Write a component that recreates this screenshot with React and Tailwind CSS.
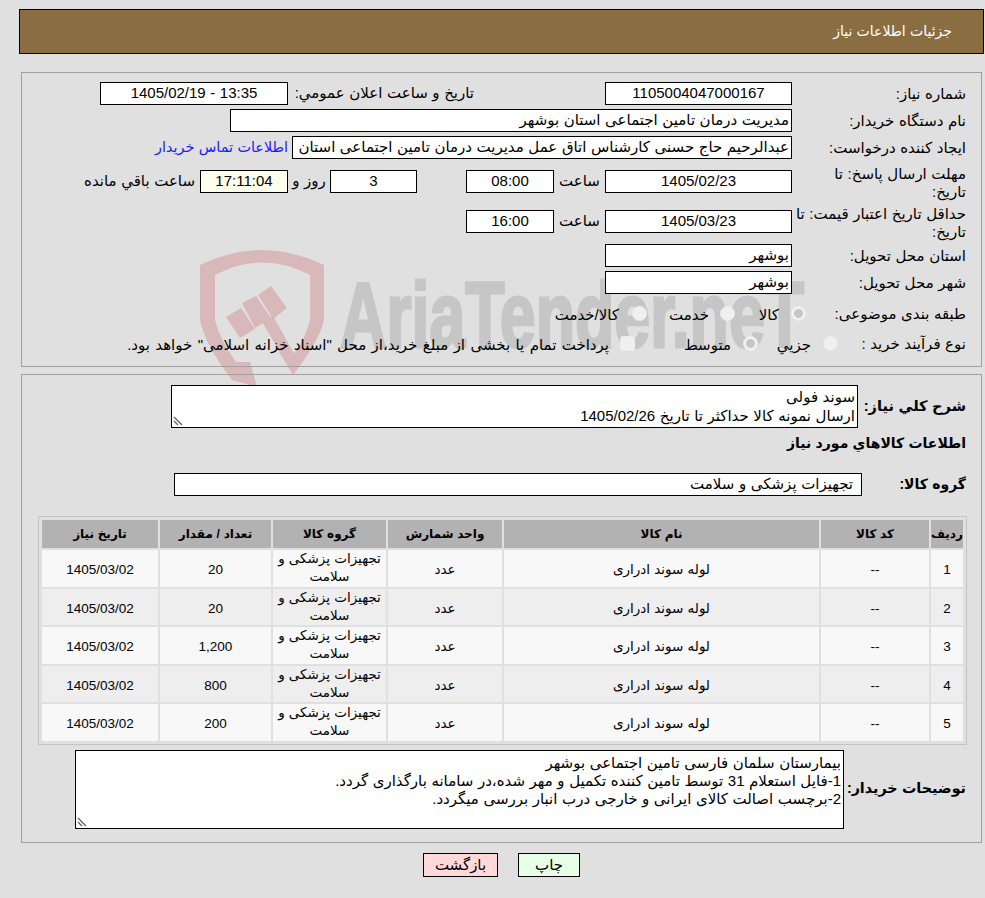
import React from "react";

const rows = [
  { id: 1, qty: "20" },
  { id: 2, qty: "20" },
  { id: 3, qty: "1,200" },
  { id: 4, qty: "800" },
  { id: 5, qty: "200" },
];

const Field = ({ className = "", children }) => (
  <div className={`h-[23px] shrink-0 border border-black bg-white flex items-center justify-center overflow-hidden whitespace-nowrap ${className}`}>
    {children}
  </div>
);

const Label = ({ className = "", children }) => (
  <div className={`w-[174px] shrink-0 leading-[18px] ${className}`}>{children}</div>
);

const Radio = ({ checked, className = "" }) => (
  <span className={`w-[15px] h-[15px] shrink-0 rounded-full border border-[#ececec] mt-[-2px] flex items-center justify-center ${checked ? "bg-[#f3f3f3]" : "bg-[#f0f0f0]"} ${className}`}>
    {checked && <span className="w-[9px] h-[9px] rounded-full bg-[#c6c6c6]" />}
  </span>
);

const Grip = () => (
  <svg className="absolute left-[1px] bottom-[1px]" width="10" height="10" viewBox="0 0 10 10">
    <path d="M1 1L9 9M1 5L5 9" stroke="#666" strokeWidth="1.4" fill="none" />
  </svg>
);

// background logo, the page's form sits on top of it
const Watermark = () => (
  <div className="absolute left-[198px] top-[248px] w-[620px] h-[145px] pointer-events-none" dir="ltr">
    <svg className="absolute left-0 top-0" width="135" height="145" viewBox="198 248 135 145">
      <path
        d="M200 265Q262 235 324 265V320Q320 340 293 375L275 345L293 355Q306 338 310 320V275Q262 250 215 275V320Q220 340 236 362L250 362L257 387L232 380Q205 345 200 320Z"
        fill="#d9b8ba"
      />
      <path d="M226 317L241 308L255 329L240 338Z M242 303L256 296L271 318L255 328Z M258 295L271 286L287 308L273 319Z" fill="#d9b8ba" />
      <path d="M262 322L273 316L296 357L286 362Z" fill="#d9b8ba" />
    </svg>
    <div className="absolute left-[142px] top-[7px] text-[92px] font-bold text-[#c6c6c6] leading-[120px] whitespace-nowrap origin-left scale-x-[0.7] [-webkit-text-stroke:3px_#c6c6c6] font-['Liberation_Sans',sans-serif]">
      AriaTender.neT
    </div>
  </div>
);

const App = () => {
  return (
    <div dir="rtl" className="relative min-h-[898px] bg-[#e0e0e0] text-[15px] text-black overflow-hidden [word-spacing:0.4px] font-['Liberation_Sans','DejaVu_Sans',sans-serif]">
      <div className="h-[9px]" />
      <div className="ml-[19px] mr-[1px] h-[45px] bg-[#8b6d42] border border-black flex items-center pr-[31px] text-white text-[14px]">
        جزئیات اطلاعات نیاز
      </div>

      <Watermark />

      <section className="relative ml-[21px] mr-[3px] mt-[18px] h-[295px] border border-[#a0a0a0] pr-[15px] pt-[9px]">
        <div className="flex items-center h-[23px]">
          <Label>شماره نیاز:</Label>
          <Field className="w-[187px]">1105004047000167</Field>
          <div className="w-[131px]" />
          <div className="w-[186px] shrink-0 whitespace-nowrap">تاريخ و ساعت اعلان عمومي:</div>
          <Field className="w-[188px]"><span dir="ltr">1405/02/19 - 13:35</span></Field>
        </div>
        <div className="flex items-center h-[23px] mt-[4px]">
          <Label>نام دستگاه خریدار:</Label>
          <Field className="w-[562px] !justify-start px-[2px]">مدیریت درمان تامین اجتماعی استان بوشهر</Field>
        </div>
        <div className="flex items-center h-[23px] mt-[4px]">
          <Label>ایجاد کننده درخواست:</Label>
          <Field className="w-[500px] !justify-start px-[2px]">عبدالرحیم حاج حسنی کارشناس اتاق عمل مدیریت درمان تامین اجتماعی استان</Field>
          <a className="mr-[4px] text-[#1a1aff] text-[14.4px] whitespace-nowrap">اطلاعات تماس خریدار</a>
        </div>
        <div className="flex items-start h-[36px] mt-[11px]">
          <Label className="mt-[-5px]">مهلت ارسال پاسخ: تا<br />تاریخ:</Label>
          <Field className="w-[187px]">1405/02/23</Field>
          <div className="w-[51px] h-[23px] flex items-center justify-center shrink-0">ساعت</div>
          <Field className="w-[88px]">08:00</Field>
          <div className="w-[49px] shrink-0" />
          <Field className="w-[87px]">3</Field>
          <div className="w-[42px] h-[23px] flex items-center justify-center shrink-0">روز و</div>
          <Field className="w-[88px] !bg-[#fffdeb]">17:11:04</Field>
          <div className="h-[23px] flex items-center mr-[5px] whitespace-nowrap">ساعت باقي مانده</div>
        </div>
        <div className="flex items-start h-[36px] mt-[4px]">
          <Label className="mt-[-5px]">حداقل تاریخ اعتبار قیمت: تا<br />تاریخ:</Label>
          <Field className="w-[187px]">1405/03/23</Field>
          <div className="w-[51px] h-[23px] flex items-center justify-center shrink-0">ساعت</div>
          <Field className="w-[88px]">16:00</Field>
        </div>
        <div className="flex items-center h-[23px] mt-[-2px]">
          <Label>استان محل تحویل:</Label>
          <Field className="w-[187px] !justify-start px-[2px]">بوشهر</Field>
        </div>
        <div className="flex items-center h-[23px] mt-[4px]">
          <Label>شهر محل تحویل:</Label>
          <Field className="w-[187px] !justify-start px-[2px]">بوشهر</Field>
        </div>
        <div className="flex items-center h-[20px] mt-[10px]">
          <Label>طبقه بندی موضوعی:</Label>
          <Radio checked className="mr-[-14px]" />
          <span className="mr-[12px] w-[44px] shrink-0 pt-[3px]">کالا</span>
          <Radio />
          <span className="mr-[11px] w-[62px] shrink-0 pt-[3px]">خدمت</span>
          <Radio />
          <span className="mr-[13px] whitespace-nowrap pt-[3px]">کالا/خدمت</span>
        </div>
        <div className="flex items-center h-[20px] mt-[10px]">
          <div className="w-[128px] shrink-0 whitespace-nowrap">نوع فرآیند خرید :</div>
          <Radio />
          <span className="mr-[12px] w-[53px] shrink-0 whitespace-nowrap pt-[3px]">جزيي</span>
          <Radio checked />
          <span className="mr-[12px] w-[96px] shrink-0 pt-[3px]">متوسط</span>
          <span className="w-[15px] h-[15px] shrink-0 rounded-[3px] bg-[#f0f0f0] border border-[#ececec] mt-[-2px]" />
          <span className="mr-[11px] whitespace-nowrap pt-[3px] [word-spacing:1.2px]">پرداخت تمام یا بخشی از مبلغ خرید،از محل "اسناد خزانه اسلامی" خواهد بود.</span>
        </div>
      </section>

      <section className="relative ml-[21px] mr-[3px] mt-[7px] h-[469px] border border-[#a0a0a0] pr-[15px] pt-[10px]">
        <div className="flex items-center h-[43px]">
          <div className="w-[108px] shrink-0 font-bold text-[14.6px] whitespace-nowrap">شرح كلي نياز:</div>
          <div className="relative w-[687px] h-[43px] border border-black bg-white px-[2px] leading-[18.5px] pt-[2px]">
            <div>سوند فولی</div>
            <div>ارسال نمونه کالا حداکثر تا تاریخ 1405/02/26</div>
            <Grip />
          </div>
        </div>
        <div className="font-bold text-[14px] mt-[5px] leading-[20px]">اطلاعات كالاهاي مورد نياز</div>
        <div className="flex items-center h-[23px] mt-[20px]">
          <div className="w-[104px] shrink-0 font-bold text-[14px]">گروه کالا:</div>
          <Field className="w-[688px] !justify-start px-[8px]">تجهیزات پزشکی و سلامت</Field>
        </div>

        <div className="mt-[20px] ml-[16px] mr-[-1px] border border-[#c4c4c4] p-[1px]">
          <table className="w-full table-fixed border-separate border-spacing-[2px] text-center text-[13.5px]">
            <colgroup>
              <col className="w-[32px]" />
              <col className="w-[108px]" />
              <col className="w-[315px]" />
              <col className="w-[114px]" />
              <col className="w-[113px]" />
              <col className="w-[111px]" />
              <col />
            </colgroup>
            <thead>
              <tr className="h-[28px] bg-[#b2b2b2] text-[12px]">
                <th className="font-bold p-0">ردیف</th>
                <th className="font-bold p-0">کد کالا</th>
                <th className="font-bold p-0">نام کالا</th>
                <th className="font-bold p-0">واحد شمارش</th>
                <th className="font-bold p-0">گروه کالا</th>
                <th className="font-bold p-0">تعداد / مقدار</th>
                <th className="font-bold p-0">تاریخ نیاز</th>
              </tr>
            </thead>
            <tbody>
              {rows.map((r) => (
                <tr key={r.id} className={`h-[36.5px] ${r.id % 2 === 0 ? "bg-[#eeeeee]" : "bg-[#f8f8f8]"}`}>
                  <td className="p-0 pt-[4px]">{r.id}</td>
                  <td className="p-0 pt-[4px]">--</td>
                  <td className="p-0 pt-[4px]">لوله سوند ادراری</td>
                  <td className="p-0 pt-[4px]">عدد</td>
                  <td className="p-0 leading-[18px]">تجهیزات پزشکی و سلامت</td>
                  <td className="p-0 pt-[4px]">{r.qty}</td>
                  <td className="p-0 pt-[4px]">1405/03/02</td>
                </tr>
              ))}
            </tbody>
          </table>
        </div>

        <div className="flex items-center h-[79px] mt-[5px]">
          <div className="w-[122px] shrink-0 font-bold text-[14.3px] whitespace-nowrap">توضیحات خریدار:</div>
          <div className="relative w-[769px] h-[79px] border border-black bg-white px-[2px] pt-[3px] leading-[18px]">
            <div>بیمارستان سلمان فارسی تامین اجتماعی بوشهر</div>
            <div>1-فایل استعلام 31 توسط تامین کننده تکمیل و مهر شده،در سامانه بارگذاری گردد.</div>
            <div>2-برچسب اصالت کالای ایرانی و خارجی درب انبار بررسی میگردد.</div>
            <Grip />
          </div>
        </div>
      </section>

      <div className="flex justify-center gap-[20px] mt-[10px] pl-[18px]">
        <button className="w-[62px] h-[24px] border border-black bg-[#e6ffe6]">چاپ</button>
        <button className="w-[75px] h-[24px] border border-black bg-[#ffd9d9]">بازگشت</button>
      </div>
    </div>
  );
};

export default App;
